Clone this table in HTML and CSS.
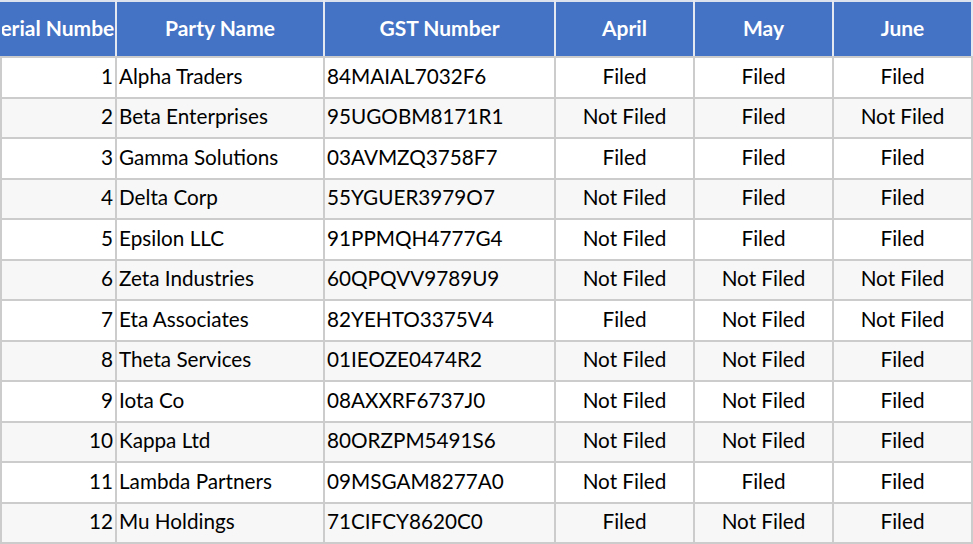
FILE: index.html
```html
<!DOCTYPE html>
<html>
<head>
<meta charset="utf-8">
<link rel="stylesheet" href="styles.css">
</head>
<body>
<table class="grid">
  <colgroup>
    <col class="c-num"><col class="c-name"><col class="c-gst"><col class="c-m"><col class="c-m"><col class="c-m">
  </colgroup>
  <thead>
    <tr>
      <th><div class="hc hc-first"><span>Serial Number</span></div></th>
      <th><div class="hc"><span>Party Name</span></div></th>
      <th><div class="hc"><span>GST Number</span></div></th>
      <th><div class="hc"><span>April</span></div></th>
      <th><div class="hc"><span>May</span></div></th>
      <th><div class="hc"><span>June</span></div></th>
    </tr>
  </thead>
  <tbody>
    <tr><td class="num">1</td><td>Alpha Traders</td><td>84MAIAL7032F6</td><td class="ctr">Filed</td><td class="ctr">Filed</td><td class="ctr">Filed</td></tr>
    <tr><td class="num">2</td><td>Beta Enterprises</td><td>95UGOBM8171R1</td><td class="ctr">Not Filed</td><td class="ctr">Filed</td><td class="ctr">Not Filed</td></tr>
    <tr><td class="num">3</td><td>Gamma Solutions</td><td>03AVMZQ3758F7</td><td class="ctr">Filed</td><td class="ctr">Filed</td><td class="ctr">Filed</td></tr>
    <tr><td class="num">4</td><td>Delta Corp</td><td>55YGUER3979O7</td><td class="ctr">Not Filed</td><td class="ctr">Filed</td><td class="ctr">Filed</td></tr>
    <tr><td class="num">5</td><td>Epsilon LLC</td><td>91PPMQH4777G4</td><td class="ctr">Not Filed</td><td class="ctr">Filed</td><td class="ctr">Filed</td></tr>
    <tr><td class="num">6</td><td>Zeta Industries</td><td>60QPQVV9789U9</td><td class="ctr">Not Filed</td><td class="ctr">Not Filed</td><td class="ctr">Not Filed</td></tr>
    <tr><td class="num">7</td><td>Eta Associates</td><td>82YEHTO3375V4</td><td class="ctr">Filed</td><td class="ctr">Not Filed</td><td class="ctr">Not Filed</td></tr>
    <tr><td class="num">8</td><td>Theta Services</td><td>01IEOZE0474R2</td><td class="ctr">Not Filed</td><td class="ctr">Not Filed</td><td class="ctr">Filed</td></tr>
    <tr><td class="num">9</td><td>Iota Co</td><td>08AXXRF6737J0</td><td class="ctr">Not Filed</td><td class="ctr">Not Filed</td><td class="ctr">Filed</td></tr>
    <tr><td class="num">10</td><td>Kappa Ltd</td><td>80ORZPM5491S6</td><td class="ctr">Not Filed</td><td class="ctr">Not Filed</td><td class="ctr">Filed</td></tr>
    <tr><td class="num">11</td><td>Lambda Partners</td><td>09MSGAM8277A0</td><td class="ctr">Not Filed</td><td class="ctr">Filed</td><td class="ctr">Filed</td></tr>
    <tr><td class="num">12</td><td>Mu Holdings</td><td>71CIFCY8620C0</td><td class="ctr">Filed</td><td class="ctr">Not Filed</td><td class="ctr">Filed</td></tr>
  </tbody>
</table>
</body>
</html>
```
FILE: styles.css
```css
html, body {
  margin: 0;
  padding: 0;
  background: #ffffff;
}
body {
  font-family: Lato, "Open Sans", sans-serif;
  width: 973px;
  height: 544px;
  overflow: hidden;
}
.grid {
  border-collapse: collapse;
  table-layout: fixed;
  width: 973px;
  color: #000;
}
.c-num { width: 115px; }
.c-name { width: 208px; }
.c-gst { width: 231px; }
.c-m { width: 139px; }
.grid thead tr { height: 56px; }
.grid th {
  background: #4472c4;
  color: #ffffff;
  font-weight: 700;
  font-size: 21px;
  padding: 0;
  border: 2px solid #e4e8f0;
  border-top-color: #dde3ee;
  border-bottom-color: #cccccc;
  overflow: hidden;
}
.grid th:first-child { border-left-color: #4472c4; }
.hc {
  display: flex;
  justify-content: center;
  align-items: center;
  white-space: nowrap;
  overflow: hidden;
  height: 54px;
  box-sizing: border-box;
  padding-bottom: 4px;
}
.hc-first { padding-right: 6px; }
.grid tbody tr { height: 40.5px; }
.grid tbody tr:nth-child(even) td { background: #f7f7f7; }
.grid td {
  font-size: 20.7px;
  padding: 0 2px 3px;
  border: 2px solid #cccccc;
  white-space: nowrap;
  overflow: hidden;
  text-align: left;
}
.grid td.num { text-align: right; padding-right: 2px; }
.grid td.ctr { text-align: center; }
```
